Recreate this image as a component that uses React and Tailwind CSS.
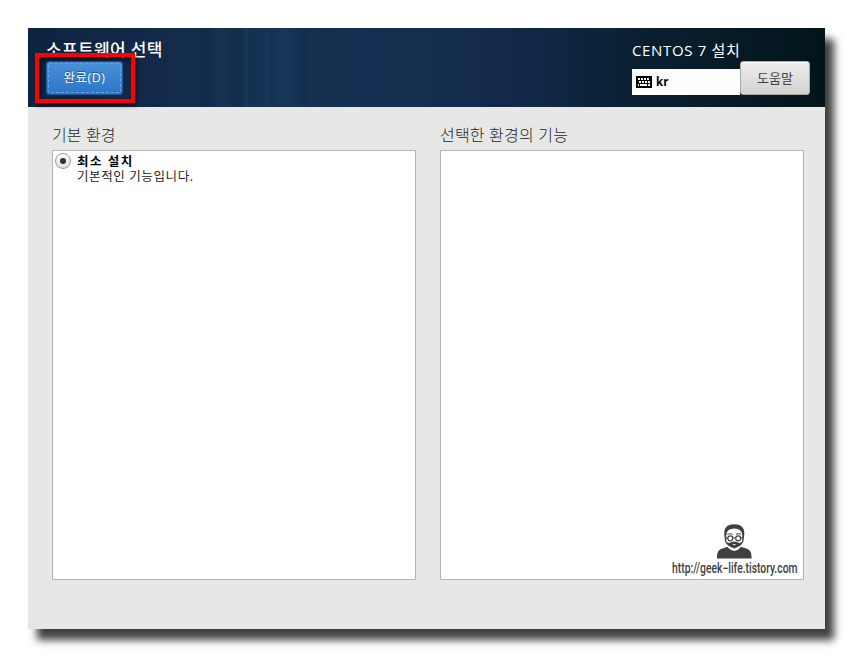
function KeyboardIcon() {
  return (
    <svg width="16" height="12" viewBox="0 0 16 12" shapeRendering="crispEdges" className="shrink-0">
      <rect width="16" height="12" rx="1" fill="#000" />
      <g fill="#fff">
        {[2, 5, 8, 11].map((x) => (
          <rect key={x} x={x} y="2" width="2" height="2" />
        ))}
        {[3, 6, 9, 12].map((x) => (
          <rect key={x} x={x} y="5" width="2" height="2" />
        ))}
        <rect x="2" y="8" width="1" height="2" />
        <rect x="4" y="8" width="7" height="2" />
        <rect x="12" y="8" width="2" height="2" />
      </g>
    </svg>
  );
}

function GeekIcon() {
  return (
    <svg width="35" height="35" viewBox="0 0 35 35" className="block">
      <path d="M0 34.500V32Q0 26 6 24.300L11.500 22.500Q17.500 29 23 22.500L28.500 24.300Q34.500 26 34.500 32V34.500Z" fill="#404040" />
      <path d="M9 17.500Q10 26 17.250 27Q24.500 26 25.500 17.500Z" fill="#fff" />
      <path d="M7.500 12.500Q5.500 .5 17.250 .3Q29 .5 27 12.500L26.500 17.300Q25 22 17.250 24.500Q9.500 22 8 17.300Z" fill="#404040" />
      <path d="M9.300 17.500V10.500Q10 4.500 17.250 4.500T25.200 10.500V17.500Q23 19.800 20.600 18.300Q17.250 16.500 13.900 18.300Q11.500 19.800 9.300 17.500Z" fill="#fff" />
      <path d="M10.300 10.300Q12.800 9 15.500 10.300M19 10.300Q21.700 9 24.200 10.300" fill="none" stroke="#404040" strokeWidth="1" />
      <circle cx="13.300" cy="14.300" r="2.500" fill="#fff" stroke="#404040" strokeWidth="1.200" />
      <circle cx="21.200" cy="14.300" r="2.500" fill="#fff" stroke="#404040" strokeWidth="1.200" />
      <path d="M15.800 14H18.700M8.500 14H10.800M23.700 14H26" stroke="#404040" strokeWidth="1.200" />
      <path d="M15.500 20.500Q17.250 19.300 19 20.500Q17.250 21.800 15.500 20.500Z" fill="#fff" />
    </svg>
  );
}

function Header() {
  return (
    <header className="relative flex h-[79px] shrink-0 justify-between bg-[linear-gradient(90deg,#0d2440_0%,#13294a_16%,#143253_30%,#142e50_50%,#13284a_61%,#0e253f_68%,#0a1f30_77%,#071b28_87%,#02151a_100%)] text-white">
      <div className="absolute inset-y-0 left-[170px] w-[180px] bg-[linear-gradient(90deg,transparent_0px,rgba(0,0,0,0.12)_8px,transparent_14px,rgba(60,110,160,0.08)_22px,rgba(0,0,0,0.1)_42px,rgba(60,110,160,0.1)_49px,transparent_52px,transparent_66px,rgba(60,110,160,0.1)_69px,transparent_72px,rgba(60,110,160,0.09)_88px,rgba(0,0,0,0.06)_108px,transparent_113px,rgba(0,0,0,0.05)_130px,transparent_150px)]" />
      <div className="relative flex flex-col items-start pl-[18px] pt-[10px]">
        <h1 className="h-[23px] whitespace-nowrap text-[17px] font-medium leading-[23px] tracking-[0.35px]">소프트웨어 선택</h1>
        <button className="flex h-[34px] w-[77px] items-center justify-center rounded-[3px] border border-[#1d5a9f] bg-gradient-to-b from-[#4a90d9] to-[#2b76c9] p-px text-[12.500px] leading-none tracking-[0.500px] [text-shadow:0_-1px_1px_#174d84]">
          <span className="flex h-full w-full items-center justify-center rounded-[2px] border border-dashed border-[#6fa6e0]">완료(D)</span>
        </button>
        <div className="absolute left-[7px] top-[25px] h-[50px] w-[100px] border-4 border-[#fe0000] shadow-[2px_3px_4px_rgba(0,0,0,0.5),inset_2px_3px_4px_rgba(0,0,0,0.5)]" />
      </div>
      <div className="relative mr-[15px] flex">
        <div className="w-[108px] pt-[11px]">
          <div className="h-[30px] whitespace-nowrap text-[15px] leading-[22px] tracking-[0.650px]">CENTOS 7 설치</div>
          <div className="flex h-[26px] items-center gap-1 bg-[#fdfdfd] pl-1 text-black">
            <KeyboardIcon />
            <span className="text-[11.500px] font-bold leading-none">kr</span>
          </div>
        </div>
        <button className="mt-[33px] h-[34px] w-[70px] rounded-[3px] border border-[#a9a9a5] bg-gradient-to-b from-[#ededed] to-[#d2d2d0] text-[13px] leading-none text-[#3e4446] shadow-[inset_0_1px_0_#fff]">
          도움말
        </button>
      </div>
    </header>
  );
}

export default function App() {
  return (
    <div className="h-[658px] w-[854px] overflow-hidden bg-white pl-7 pt-7 font-['Open_Sans','Noto_Sans_CJK_KR',sans-serif]">
      <div className="flex h-[601px] w-[797px] flex-col bg-[#e7e7e5] shadow-[9px_11px_8px_#404040]">
        <Header />
        <main className="flex gap-6 pl-6 pt-[16px] text-[#24282a]">
          <section className="w-[364px]">
            <h2 className="h-[27px] text-[16px] font-light leading-[24px] tracking-[0.100px]">기본 환경</h2>
            <div className="h-[430px] border border-[#b4b4b2] bg-white pl-[2px] pt-[2px] text-black">
              <div className="flex gap-[6px]">
                <span className="flex h-4 w-4 shrink-0 items-center justify-center rounded-full border border-[#969694] bg-gradient-to-b from-white to-[#dededc]">
                  <span className="h-[6px] w-[6px] rounded-full bg-[#2e3436]" />
                </span>
                <div className="text-[12.500px]">
                  <div className="h-[15px] font-bold leading-[17px] tracking-[1.500px]">최소 설치</div>
                  <div className="h-[17px] leading-[17px] tracking-[0.600px] text-[#222]">기본적인 기능입니다.</div>
                </div>
              </div>
            </div>
          </section>
          <section className="w-[364px]">
            <h2 className="h-[27px] text-[16px] font-light leading-[24px] tracking-[0.200px]">선택한 환경의 기능</h2>
            <div className="flex h-[430px] flex-col items-end justify-end border border-[#b4b4b2] bg-white pb-[2px] pr-[5px]">
              <div className="mr-[46px]"><GeekIcon /></div>
              <div className="h-[18px] w-[126px] whitespace-nowrap text-[#404040]">
                <span className="block origin-left scale-x-[0.74] font-['Roboto',sans-serif] text-[14px] font-medium leading-[19px]">http://geek−life.tistory.com</span>
              </div>
            </div>
          </section>
        </main>
      </div>
    </div>
  );
}
